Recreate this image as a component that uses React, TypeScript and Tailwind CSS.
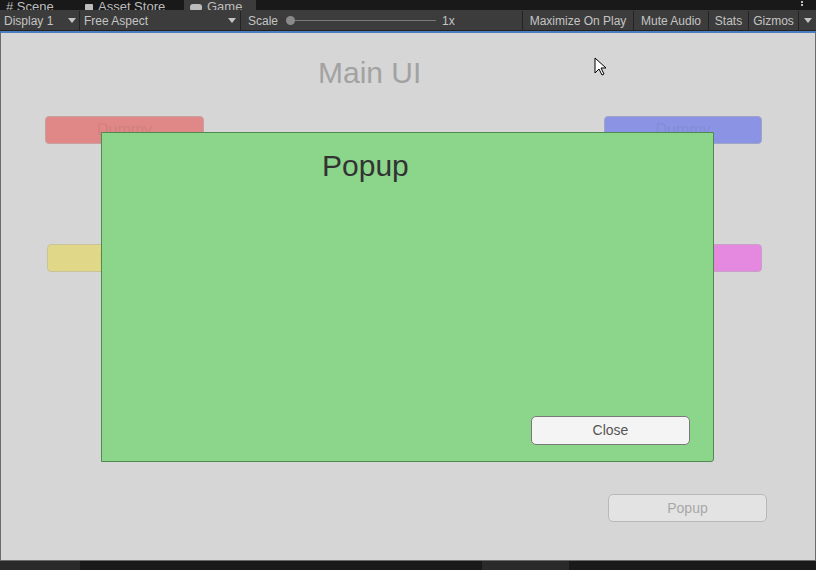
import React from 'react';

const font = { fontFamily: '"Liberation Sans", Arial, sans-serif' };

function Divider() {
  return <div className="w-px self-stretch bg-[#232323]" />;
}

function Caret() {
  return (
    <svg width="8" height="5" viewBox="0 0 8 5" className="fill-[#c4c4c4]">
      <path d="M0 0h8L4 5z" />
    </svg>
  );
}

function Toolbar() {
  return (
    <div className="flex h-[21px] items-stretch bg-[#3c3c3c] pt-px text-[12px] text-[#c4c4c4] border-b border-[#232323]">
      <div className="flex w-[79px] items-center justify-between pl-1 pr-[3px]">
        <span>Display 1</span>
        <Caret />
      </div>
      <Divider />
      <div className="flex w-[160px] items-center justify-between pl-[4px] pr-[4px]">
        <span>Free Aspect</span>
        <Caret />
      </div>
      <Divider />
      <div className="flex w-[281px] items-center pl-[7px]">
        <span>Scale</span>
        <div className="relative ml-[8px] flex h-[10px] w-[150px] items-center">
          <div className="h-px w-full bg-[#7a7a7a]" />
          <div className="absolute left-0 h-[9px] w-[9px] rounded-full bg-[#8a8a8a]" />
        </div>
        <span className="ml-[6px]">1x</span>
      </div>
      <Divider />
      <div className="flex w-[110px] items-center justify-center">Maximize On Play</div>
      <Divider />
      <div className="flex w-[74px] items-center justify-center">Mute Audio</div>
      <Divider />
      <div className="flex w-[39px] items-center justify-center">Stats</div>
      <Divider />
      <div className="flex w-[49px] items-center justify-center">Gizmos</div>
      <Divider />
      <div className="flex flex-1 items-center justify-center">
        <Caret />
      </div>
    </div>
  );
}

function Tabs() {
  return (
    <div className="relative flex h-[10px] overflow-hidden bg-[#191919] text-[13px] leading-none text-[#bdbdbd]">
      <div className="flex w-[80px] items-end pl-[6px]">
        <span className="-mb-[3px]"># Scene</span>
      </div>
      <div className="flex w-[104px] items-end gap-[5px] pl-[5px]">
        <span className="-mb-[4px] inline-block h-[10px] w-[8px] rounded-[1px] bg-[#bdbdbd]" />
        <span className="-mb-[3px]">Asset Store</span>
      </div>
      <div className="flex w-[72px] items-end gap-[5px] bg-[#3c3c3c] pl-[6px]">
        <svg width="12" height="8" viewBox="0 0 12 8" className="-mb-[1px] fill-[#bdbdbd]">
          <rect x="0" y="1" width="12" height="7" rx="3" />
        </svg>
        <span className="-mb-[3px]">Game</span>
      </div>
      <div className="absolute right-[13px] top-[1px] flex flex-col gap-[1px]">
        <span className="h-[2px] w-[2px] bg-[#bdbdbd]" />
        <span className="h-[2px] w-[2px] bg-[#bdbdbd]" />
      </div>
    </div>
  );
}

function Cursor() {
  return (
    <svg width="14" height="20" viewBox="0 0 14 20" className="absolute left-[593px] top-[24px]">
      <path d="M1 1v15l4-4 3 6 2-1-3-6h5z" fill="#fff" stroke="#000" strokeWidth="1" strokeLinejoin="round" />
    </svg>
  );
}

function GameView() {
  return (
    <div className="relative h-[530px] overflow-hidden border-x border-b border-t-2 border-x-[#6a6a6a] border-b-[#6a6a6a] border-t-[#4a7fbf] bg-[#d6d6d6]">
      <div className="absolute left-[317px] top-[17px] text-[30px] text-[#a2a2a2]">Main UI</div>

      <div className="absolute left-[44px] top-[83px] flex h-[28px] w-[159px] items-center justify-center rounded-[4px] border border-[#c9a0a0] bg-[#e08888] text-[16px] text-[#d28080]">
        Dummy
      </div>
      <div className="absolute left-[603px] top-[83px] flex h-[28px] w-[158px] items-center justify-center rounded-[4px] border border-[#a0a4c9] bg-[#8b94e4] text-[16px] text-[#838cd6]">
        Dummy
      </div>
      <div className="absolute left-[46px] top-[211px] flex h-[28px] w-[159px] items-center justify-center rounded-[4px] border border-[#c9c39a] bg-[#e0d888] text-[16px] text-[#d4cc80]">
        Dummy
      </div>
      <div className="absolute left-[603px] top-[211px] flex h-[28px] w-[158px] items-center justify-center rounded-[4px] border border-[#c9a0c6] bg-[#e488e0] text-[16px] text-[#d880d4]">
        Dummy
      </div>

      <div className="absolute left-[100px] top-[99px] h-[330px] w-[613px] rounded-br-[3px] border border-[#4f8a4f] bg-[#8bd68b]">
        <div className="absolute left-[220px] top-[10px] text-[30px] text-[#333]">Popup</div>
        <div className="absolute left-[429px] top-[283px] flex h-[29px] w-[159px] items-center justify-center rounded-[5px] border border-[#7a7a7a] bg-[#f4f4f4] text-[14px] text-[#555]">
          Close
        </div>
      </div>

      <div className="absolute left-[607px] top-[461px] flex h-[28px] w-[159px] items-center justify-center rounded-[5px] border border-[#b8b8b8] bg-[#e3e3e3] text-[14px] text-[#a8a8a8]">
        Popup
      </div>

      <Cursor />
    </div>
  );
}

function BottomStrip() {
  return (
    <div className="flex h-[9px] bg-[#191919]">
      <div className="w-[80px] bg-[#2a2a2a]" />
      <div className="w-[402px]" />
      <div className="w-[87px] bg-[#2a2a2a]" />
      <div className="flex-1" />
    </div>
  );
}

export default function App() {
  return (
    <div className="h-[570px] w-[816px] overflow-hidden bg-[#191919]" style={font}>
      <Tabs />
      <Toolbar />
      <GameView />
      <BottomStrip />
    </div>
  );
}
